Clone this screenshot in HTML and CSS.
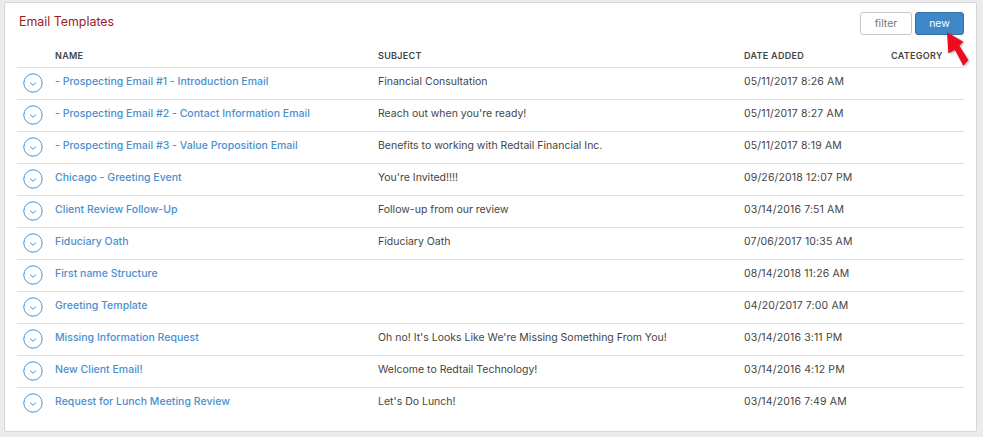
FILE: index.html
```html
<!DOCTYPE html>
<html lang="en">
<head>
  <meta charset="UTF-8" />
  <title>Email Templates</title>
  <link rel="stylesheet" href="styles.css">
</head>
<body>
  <div class="panel">
    <div class="panel-head">
      <h2>Email Templates</h2>
      <div class="actions">
        <button class="btn">filter</button>
        <button class="btn btn-primary">new</button>
      </div>
    </div>
    <table>
      <thead>
        <tr>
          <th class="col-toggle"></th>
          <th class="col-name">Name</th>
          <th class="col-subject">Subject</th>
          <th class="col-date">Date Added</th>
          <th>Category</th>
        </tr>
      </thead>
      <tbody>
        <tr><td><svg class="toggle" viewBox="0 0 20 20"><circle cx="10" cy="10" r="9.2"/><path d="M7 9.6l3 2.6 3-2.6"/></svg></td><td><a href="#">- Prospecting Email #1 - Introduction Email</a></td><td>Financial Consultation</td><td class="date">05/11/2017 8:26 AM</td><td></td></tr>
        <tr><td><svg class="toggle" viewBox="0 0 20 20"><circle cx="10" cy="10" r="9.2"/><path d="M7 9.6l3 2.6 3-2.6"/></svg></td><td><a href="#">- Prospecting Email #2 - Contact Information Email</a></td><td>Reach out when you're ready!</td><td class="date">05/11/2017 8:27 AM</td><td></td></tr>
        <tr><td><svg class="toggle" viewBox="0 0 20 20"><circle cx="10" cy="10" r="9.2"/><path d="M7 9.6l3 2.6 3-2.6"/></svg></td><td><a href="#">- Prospecting Email #3 - Value Proposition Email</a></td><td>Benefits to working with Redtail Financial Inc.</td><td class="date">05/11/2017 8:19 AM</td><td></td></tr>
        <tr><td><svg class="toggle" viewBox="0 0 20 20"><circle cx="10" cy="10" r="9.2"/><path d="M7 9.6l3 2.6 3-2.6"/></svg></td><td><a href="#">Chicago - Greeting Event</a></td><td>You're Invited!!!!</td><td class="date">09/26/2018 12:07 PM</td><td></td></tr>
        <tr><td><svg class="toggle" viewBox="0 0 20 20"><circle cx="10" cy="10" r="9.2"/><path d="M7 9.6l3 2.6 3-2.6"/></svg></td><td><a href="#">Client Review Follow-Up</a></td><td>Follow-up from our review</td><td class="date">03/14/2016 7:51 AM</td><td></td></tr>
        <tr><td><svg class="toggle" viewBox="0 0 20 20"><circle cx="10" cy="10" r="9.2"/><path d="M7 9.6l3 2.6 3-2.6"/></svg></td><td><a href="#">Fiduciary Oath</a></td><td>Fiduciary Oath</td><td class="date">07/06/2017 10:35 AM</td><td></td></tr>
        <tr><td><svg class="toggle" viewBox="0 0 20 20"><circle cx="10" cy="10" r="9.2"/><path d="M7 9.6l3 2.6 3-2.6"/></svg></td><td><a href="#">First name Structure</a></td><td></td><td class="date">08/14/2018 11:26 AM</td><td></td></tr>
        <tr><td><svg class="toggle" viewBox="0 0 20 20"><circle cx="10" cy="10" r="9.2"/><path d="M7 9.6l3 2.6 3-2.6"/></svg></td><td><a href="#">Greeting Template</a></td><td></td><td class="date">04/20/2017 7:00 AM</td><td></td></tr>
        <tr><td><svg class="toggle" viewBox="0 0 20 20"><circle cx="10" cy="10" r="9.2"/><path d="M7 9.6l3 2.6 3-2.6"/></svg></td><td><a href="#">Missing Information Request</a></td><td>Oh no! It's Looks Like We're Missing Something From You!</td><td class="date">03/14/2016 3:11 PM</td><td></td></tr>
        <tr><td><svg class="toggle" viewBox="0 0 20 20"><circle cx="10" cy="10" r="9.2"/><path d="M7 9.6l3 2.6 3-2.6"/></svg></td><td><a href="#">New Client Email!</a></td><td>Welcome to Redtail Technology!</td><td class="date">03/14/2016 4:12 PM</td><td></td></tr>
        <tr><td><svg class="toggle" viewBox="0 0 20 20"><circle cx="10" cy="10" r="9.2"/><path d="M7 9.6l3 2.6 3-2.6"/></svg></td><td><a href="#">Request for Lunch Meeting Review</a></td><td>Let's Do Lunch!</td><td class="date">03/14/2016 7:49 AM</td><td></td></tr>
      </tbody>
    </table>
    <svg class="pointer" viewBox="0 0 24 38"><path d="M1 1.300l16.300 9.400-4 4L22.300 29l-5 5.700L9 19l-6.700 3.300z"/></svg>
  </div>
</body>
</html>
```

FILE: styles.css
```css
html, body {
  height: 100%;
}
body {
  margin: 0;
  padding: 2px 6px 5px 4px;
  box-sizing: border-box;
  background: #ececec;
  font-family: Inter, "Liberation Sans", sans-serif;
  font-size: 10.5px;
  color: #454545;
  overflow: hidden;
}
.panel {
  position: relative;
  height: 100%;
  box-sizing: border-box;
  padding: 9px 12px 0 12px;
  background: #fff;
  border: 1px solid #d6d6d6;
  border-radius: 2px;
}
.panel-head {
  display: flex;
  justify-content: space-between;
  height: 28px;
}
.panel-head h2 {
  margin: 2px 0 0 2px;
  font-size: 12.4px;
  font-weight: 400;
  color: #9a1c1f;
}
.actions {
  display: flex;
  gap: 3px;
}
.btn {
  width: 52px;
  height: 23px;
  padding: 0;
  background: #fff;
  border: 1px solid #c8c8c8;
  border-radius: 3px;
  font-family: inherit;
  font-size: 10.5px;
  color: #777;
}
.btn-primary {
  width: 49px;
  background: #3f88c8;
  border-color: #33709f;
  color: #fff;
}
table {
  width: 100%;
  table-layout: fixed;
  border-collapse: collapse;
}
th {
  height: 27px;
  padding: 5px 0 0;
  box-sizing: border-box;
  border-bottom: 1px solid #e0e0e0;
  text-align: left;
  font-size: 9px;
  font-weight: 600;
  letter-spacing: 0.3px;
  text-transform: uppercase;
  color: #444;
}
.col-toggle { width: 38px; }
.col-name { width: 323px; }
.col-subject { width: 366px; }
.col-date { width: 147px; }
td {
  height: 32px;
  padding: 0 0 4px;
  box-sizing: border-box;
  border-bottom: 1px solid #e0e0e0;
  white-space: nowrap;
}
tbody tr:last-child td {
  border-bottom: 0;
}
td.date {
  letter-spacing: 0.15px;
}
a {
  color: #4a90d0;
  font-weight: 500;
  letter-spacing: 0.02px;
  text-decoration: none;
}
.toggle {
  display: block;
  width: 20px;
  height: 20px;
  margin: 4px 0 0 6px;
  fill: none;
  stroke: #4a90d0;
  stroke-width: 1;
}
.pointer {
  position: absolute;
  top: 28px;
  left: 941px;
  width: 24px;
  height: 38px;
  fill: #ef0b1e;
  filter: drop-shadow(1px 1px 1px rgba(0, 0, 0, 0.35));
}
```
